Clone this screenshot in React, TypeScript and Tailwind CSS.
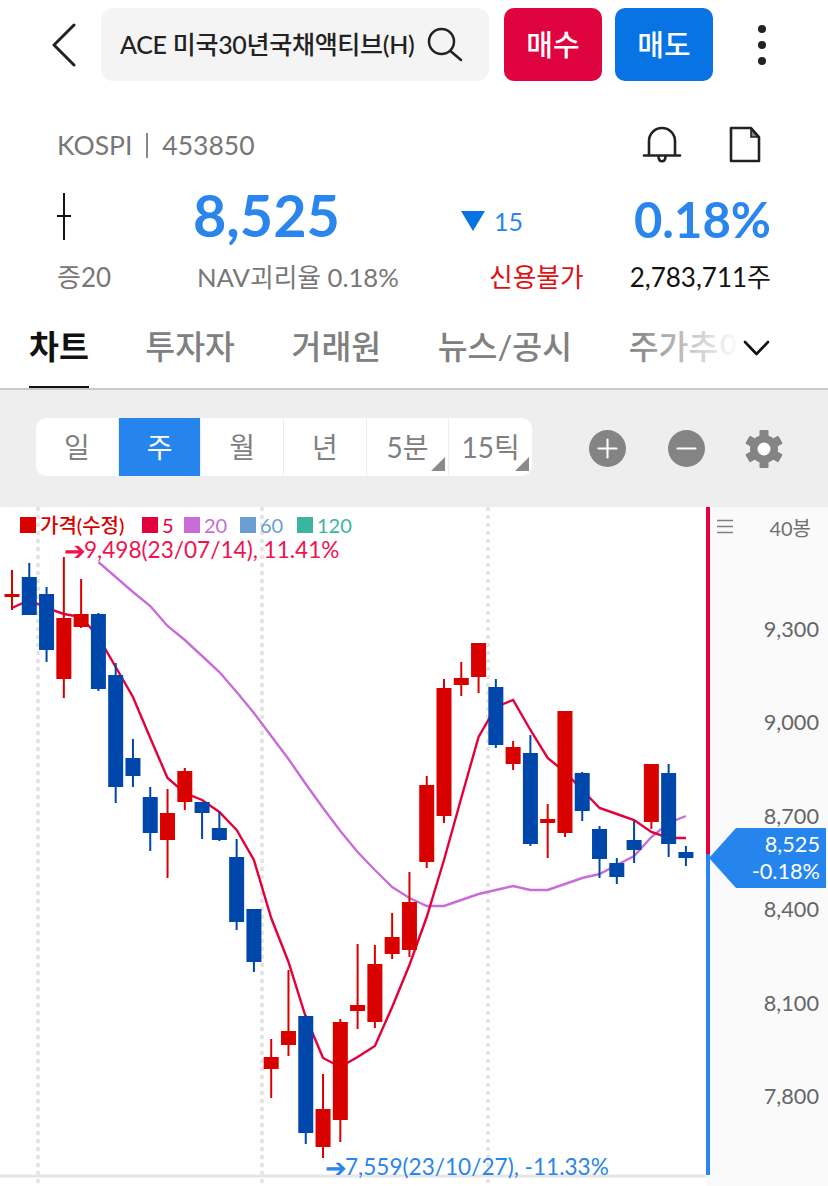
import React from "react";
import { Plus, Minus } from "lucide-react";

const R = "#d90000";
const B = "#0047ab";
type C = [number, number, number, number, string];
const candles: C[] = [
  [570, 610, 594, 597, R],
  [563, 615, 577, 615, B],
  [587, 662, 594, 650, B],
  [557, 698, 618, 679, R],
  [579, 628, 614, 627, R],
  [613, 691, 614, 689, B],
  [663, 803, 675, 787, B],
  [739, 787, 758, 776, B],
  [787, 851, 797, 833, B],
  [789, 878, 813, 840, R],
  [768, 810, 771, 802, R],
  [802, 839, 802, 813, B],
  [812, 841, 828, 840, B],
  [839, 930, 857, 922, B],
  [909, 972, 909, 962, B],
  [1039, 1098, 1057, 1069, R],
  [970, 1056, 1031, 1045, R],
  [1015, 1144, 1016, 1133, B],
  [1074, 1158, 1109, 1147, R],
  [1019, 1142, 1022, 1120, R],
  [944, 1029, 1005, 1011, R],
  [945, 1028, 964, 1022, R],
  [913, 959, 937, 954, R],
  [872, 957, 902, 950, R],
  [776, 868, 785, 862, R],
  [679, 823, 688, 816, R],
  [662, 696, 678, 685, R],
  [643, 693, 643, 677, R],
  [679, 748, 687, 745, B],
  [741, 770, 747, 764, R],
  [735, 846, 753, 844, B],
  [804, 858, 819, 823, R],
  [711, 837, 711, 833, R],
  [772, 821, 773, 811, B],
  [826, 878, 829, 859, B],
  [858, 884, 863, 877, B],
  [821, 863, 840, 850, B],
  [764, 829, 764, 822, R],
  [764, 857, 773, 844, B],
  [846, 866, 852, 858, B],
];
const cx = (i: number) => 12 + i * 17.28;
const ma5 = [608, 600, 608, 614, 617, 637, 667, 697, 738, 778, 793, 800, 812, 830, 860, 918, 962, 1017, 1058, 1067, 1057, 1046, 1007, 965, 917, 860, 798, 737, 707, 700, 730, 758, 772, 790, 808, 814, 820, 832, 838, 838];
const ma20 = [562, 577, 592, 606, 626, 640, 656, 672, 692, 713, 736, 759, 784, 808, 831, 852, 870, 887, 898, 906, 906, 900, 894, 890, 886, 890, 890, 884, 878, 874, 865, 856, 837, 823, 816];

const pts = (arr: number[], start: number) => arr.map((y, i) => `${cx(i + start)},${y}`).join(" ");

function Seg({ label, active, tri }: { label: string; active?: boolean; tri?: boolean }) {
  return (
    <div className={`relative flex h-full w-[82.7px] items-center justify-center border-r border-[#eeeeee] text-[28px] last:border-r-0 ${active ? "bg-[#2585ec] text-white" : "text-[#808080]"}`}>
      {label}
      {tri && (
        <svg className="absolute bottom-[5px] right-[3px]" width="14" height="14" viewBox="0 0 14 14">
          <polygon points="14,0 14,14 0,14" fill="#8a8a8a" />
        </svg>
      )}
    </div>
  );
}

function Legend({ color, label, cls }: { color: string; label: string; cls: string }) {
  return (
    <div className={`flex items-center gap-[4px] ${cls}`}>
      <span className="block h-[16px] w-[16px]" style={{ backgroundColor: color }} />
      <span style={{ color }}>{label}</span>
    </div>
  );
}

function Gear() {
  return (
    <svg className="ml-[40px]" width="38" height="38" viewBox="0 0 38 38">
      {[0, 60, 120].map((a) => (
        <rect key={a} x="14.5" y="0" width="9" height="38" rx="1" fill="#848484" transform={`rotate(${a} 19 19)`} />
      ))}
      <circle cx="19" cy="19" r="14" fill="#848484" />
      <circle cx="19" cy="19" r="6.5" fill="#ffffff" />
    </svg>
  );
}

export default function App() {
  return (
    <div className="h-[1186px] w-[828px] overflow-hidden bg-white font-['Lato','Noto_Sans_CJK_KR',sans-serif]">
      {/* header */}
      <div className="flex h-[103px] items-start pt-[8px]">
        <div className="flex h-[73px] w-[101px] items-center pl-[52px]">
          <svg width="24" height="44" viewBox="0 0 24 44" fill="none">
            <path d="M22 2L2 22L22 42" stroke="#222222" strokeWidth="3" strokeLinecap="round" strokeLinejoin="round" />
          </svg>
        </div>
        <div className="flex h-[73px] w-[388px] items-center justify-between rounded-[12px] bg-[#f4f4f4] pl-[19px] pr-[26px]">
          <span className="text-[25px] font-medium tracking-[-0.3px] whitespace-nowrap text-[#222222]">ACE 미국30년국채액티브(H)</span>
          <svg className="shrink-0" width="36" height="36" viewBox="0 0 36 36" fill="none">
            <circle cx="14.5" cy="14.5" r="12.5" stroke="#222222" strokeWidth="2.5" />
            <path d="M24 24.5L34 33" stroke="#222222" strokeWidth="2.5" strokeLinecap="round" />
          </svg>
        </div>
        <div className="ml-[15px] flex h-[73px] w-[98px] items-center justify-center rounded-[10px] bg-[#df043f] text-[29px] font-medium text-white">매수</div>
        <div className="ml-[13px] flex h-[73px] w-[98px] items-center justify-center rounded-[10px] bg-[#0873e2] text-[29px] font-medium text-white">매도</div>
        <div className="ml-[43px] flex h-[73px] w-[12px] flex-col items-center justify-center gap-[8px]">
          <span className="h-[8px] w-[8px] rounded-full bg-[#222222]" />
          <span className="h-[8px] w-[8px] rounded-full bg-[#222222]" />
          <span className="h-[8px] w-[8px] rounded-full bg-[#222222]" />
        </div>
      </div>

      {/* info */}
      <div className="flex h-[80px] items-start justify-between pl-[57px] pr-[67px] pt-[22px]">
        <div className="flex items-center text-[26.5px] leading-[40px] text-[#777777]">
          <span>KOSPI</span>
          <span className="mx-[14px] h-[25px] w-[2px] bg-[#888888]" />
          <span>453850</span>
        </div>
        <div className="flex items-start gap-[47px]">
          <svg width="40" height="42" viewBox="0 0 40 42" fill="none" stroke="#222222" strokeWidth="2.6">
            <path d="M7 30V16a13 13 0 0 1 26 0V30" />
            <path d="M2 30.5H38" strokeLinecap="round" />
            <path d="M16.5 31c0 7 7 7 7 0" />
          </svg>
          <svg className="mt-[1px]" width="32" height="37" viewBox="0 0 32 37" fill="none" stroke="#222222" strokeWidth="2.6">
            <path d="M2 2H22L30 11V35H2Z" strokeLinejoin="round" />
            <path d="M22 3V11H29Z" fill="#888888" strokeWidth="1.6" />
          </svg>
        </div>
      </div>

      <div className="grid grid-cols-[136px_268px_1fr_auto] pl-[57px] pr-[57px]">
        <div className="flex h-[68px] items-center">
          <svg width="14" height="48" viewBox="0 0 14 48">
            <path d="M7 0V47M0 23H14" stroke="#111111" strokeWidth="2" />
          </svg>
        </div>
        <div className="flex h-[68px] items-center pb-[4px] text-[57.5px] font-bold text-[#2a85ec]">8,525</div>
        <div className="flex h-[68px] items-center gap-[9px] pt-[8px] text-[#2a85ec]">
          <svg width="24" height="20" viewBox="0 0 24 20">
            <polygon points="0,0 24,0 12,20" fill="#0873e2" />
          </svg>
          <span className="pt-[2px] text-[25px]">15</span>
        </div>
        <div className="flex h-[68px] items-center justify-end pt-[6px] text-[49px] font-bold text-[#2a85ec]">0.18%</div>

        <div className="flex h-[50px] items-center pt-[2px] text-[26px] text-[#777777]">증20</div>
        <div className="ml-[4px] flex h-[50px] items-center pt-[2px] text-[25.7px] text-[#777777]">NAV괴리율 0.18%</div>
        <div className="ml-[28px] flex h-[50px] items-center pt-[2px] text-[25.7px] text-[#e01010]">신용불가</div>
        <div className="flex h-[50px] items-center justify-end pt-[2px] text-[26px] text-[#111111]">2,783,711주</div>
      </div>

      {/* tabs */}
      <div className="relative flex h-[89px] items-center gap-[56.5px] overflow-hidden border-b-2 border-[#c8c8c8] pl-[29px] pt-[6px] text-[32.5px] font-medium whitespace-nowrap text-[#808080]">
        <div className="relative flex h-full items-center font-bold text-[#111111]">
          차트
          <span className="absolute inset-x-0 bottom-[-2px] h-[4px] bg-[#111111]" />
        </div>
        <span>투자자</span>
        <span>거래원</span>
        <span>뉴스/공시</span>
        <span>주가추이</span>
        <div className="absolute right-0 top-0 flex h-full w-[200px] items-center justify-end bg-gradient-to-r from-transparent to-white to-[56%] pr-[58px] pt-[6px]">
          <svg width="27" height="16" viewBox="0 0 27 16" fill="none">
            <path d="M2 2L13.5 14L25 2" stroke="#111111" strokeWidth="2.6" strokeLinecap="round" strokeLinejoin="round" />
          </svg>
        </div>
      </div>

      {/* toolbar */}
      <div className="flex h-[117px] items-center bg-[#eeeeee] pl-[36px]">
        <div className="mb-[3px] flex h-[58px] w-[496px] overflow-hidden rounded-[10px] bg-white">
          <Seg label="일" />
          <Seg label="주" active />
          <Seg label="월" />
          <Seg label="년" />
          <Seg label="5분" tri />
          <Seg label="15틱" tri />
        </div>
        <div className="ml-[57px] flex h-[37px] w-[37px] items-center justify-center rounded-full bg-[#848484]">
          <Plus size={31} strokeWidth={1.6} className="text-white" />
        </div>
        <div className="ml-[42px] flex h-[37px] w-[37px] items-center justify-center rounded-full bg-[#848484]">
          <Minus size={31} strokeWidth={1.6} className="text-white" />
        </div>
        <Gear />
      </div>

      {/* chart */}
      <div className="flex h-[679px]">
        <div className="relative h-full w-[706px] shrink-0">
          <svg className="block" width="706" height="679" viewBox="0 507 706 679">
            <path d="M38 507V1186M262 507V1186M488 507V1186" stroke="#e2e2e2" strokeWidth="3.5" strokeDasharray="4 4" />
            <path d="M0 1176H706" stroke="#e6e6e6" strokeWidth="3" />
            <polyline points={pts(ma20, 5)} fill="none" stroke="#c86dd7" strokeWidth="2.4" />
            <polyline points={pts(ma5, 0)} fill="none" stroke="#e4003a" strokeWidth="2.4" />
            {candles.map(([wt, wb, bt, bb, c], i) => {
              const x = cx(i);
              return (
                <g key={i}>
                  <rect x={x - 1} y={wt} width="2" height={wb - wt} fill={c} />
                  <rect x={x - 7.5} y={bt} width="15" height={bb - bt} fill={c} />
                </g>
              );
            })}
          </svg>
          <div className="absolute left-0 top-[7px] h-[22px] w-full text-[20px] leading-[22px]">
            <div className="flex items-center pl-[20px]">
              <Legend color="#d90000" label="가격(수정)" cls="w-[122px] font-medium" />
              <Legend color="#e4003a" label="5" cls="w-[42px]" />
              <Legend color="#c86dd7" label="20" cls="w-[56px]" />
              <Legend color="#6b9fd4" label="60" cls="w-[57px]" />
              <Legend color="#3ab5a0" label="120" cls="w-[70px]" />
            </div>
          </div>
          <div className="absolute left-[64px] top-[29px] flex items-center text-[22.6px] leading-[28px] whitespace-nowrap text-[#f0134d]">
            <span className="w-[20px] text-[26px]">➔</span>9,498(23/07/14), 11.41%
          </div>
          <div className="absolute left-[325px] top-[646px] flex items-center text-[22.6px] leading-[28px] whitespace-nowrap text-[#2a85ec]">
            <span className="w-[20px] text-[26px]">➔</span>7,559(23/10/27), -11.33%
          </div>
        </div>

        <div className="relative flex h-full w-[122px] flex-col bg-[#fafafa]">
          <div className="absolute left-0 top-0 h-[347px] w-[4px] bg-[#e4003a]" />
          <div className="absolute left-0 top-[347px] h-[321px] w-[4px] bg-[#2a85ec]" />
          <div className="flex h-[40px] items-center pb-[2px] pl-[11px] pr-[17px]">
            <svg width="16" height="15" viewBox="0 0 16 15">
              <path d="M0 1.5H16M0 7.5H16M0 13.5H16" stroke="#808080" strokeWidth="1.6" />
            </svg>
            <span className="ml-auto pt-[3px] text-[20px] text-[#707070]">40봉</span>
          </div>
          <div className="flex flex-col items-end pr-[9px] pt-[36px] text-[21.7px] leading-[93.4px] text-[#666666]">
            <span>9,300</span>
            <span>9,000</span>
            <span>8,700</span>
            <span>8,400</span>
            <span>8,100</span>
            <span>7,800</span>
          </div>
          <div className="absolute left-[3px] top-[321px] flex h-[60px] w-[117px] flex-col items-end justify-center bg-[#2585ec] pr-[6px] text-[21.7px] leading-[27px] text-white [clip-path:polygon(0_50%,27px_0,100%_0,100%_100%,27px_100%)]">
            <span>8,525</span>
            <span>-0.18%</span>
          </div>
        </div>
      </div>
    </div>
  );
}
